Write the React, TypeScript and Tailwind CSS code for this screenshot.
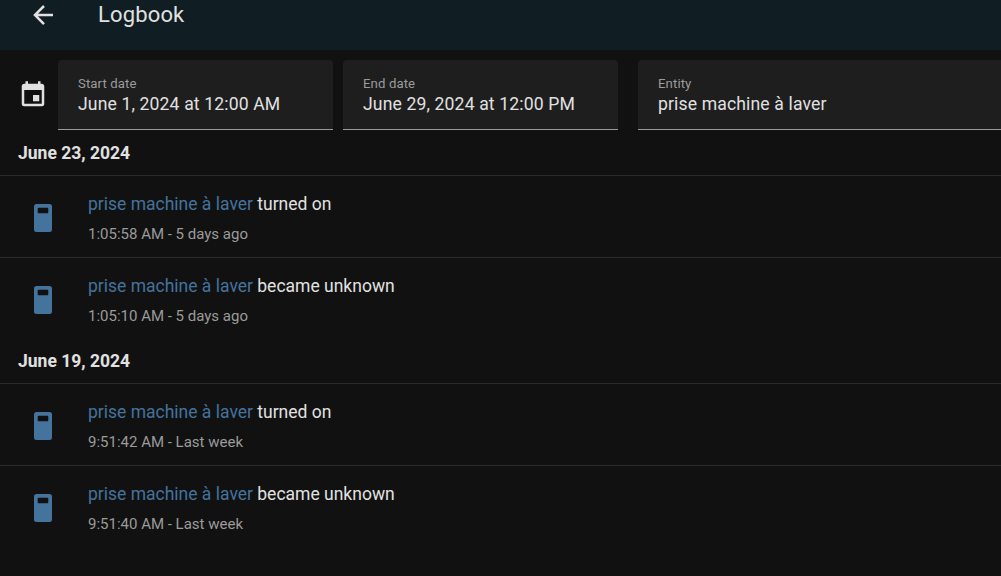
const font = { fontFamily: 'Roboto, sans-serif' };

function Field({ label, value, className }: { label: string; value: string; className: string }) {
  return (
    <div className={`h-[70px] shrink-0 rounded-t-[4px] bg-[#1e1e1e] border-b border-[#9b9b9b] pl-5 pt-[15px] ${className}`}>
      <div className="text-[13.2px] leading-[17px] tracking-[0.1px] text-[#9b9b9b]">{label}</div>
      <div className="text-[17.6px] leading-[24px] tracking-[0.13px] text-[#e1e1e1] whitespace-nowrap">{value}</div>
    </div>
  );
}

function DeviceIcon() {
  return (
    <svg width="18" height="28" viewBox="0 0 18 28" className="shrink-0">
      <path
        fillRule="evenodd"
        fill="#44739e"
        d="M2.5 0H15.5A2.5 2.5 0 0 1 18 2.5V25.5A2.5 2.5 0 0 1 15.5 28H2.5A2.5 2.5 0 0 1 0 25.5V2.5A2.5 2.5 0 0 1 2.5 0ZM4.7 3.7A1 1 0 0 0 3.7 4.7V8.3A1 1 0 0 0 4.7 9.3H13.3A1 1 0 0 0 14.3 8.3V4.7A1 1 0 0 0 13.3 3.7Z"
      />
    </svg>
  );
}

function Row({ action, time, last }: { action: string; time: string; last?: boolean }) {
  return (
    <div className={`h-[82px] flex items-start ${last ? '' : 'border-b border-[#2b2b2b]'}`}>
      <div className="w-[88px] pl-[34px] pt-[28px] shrink-0 flex">
        <DeviceIcon />
      </div>
      <div className="pt-[16px]">
        <div className="text-[17.5px] leading-6 mb-[8px] whitespace-nowrap">
          <span className="text-[#44739e]">prise machine à laver</span>{' '}
          <span className="text-[#e1e1e1]">{action}</span>
        </div>
        <div className="text-[15px] leading-5 text-[#9b9b9b]">{time}</div>
      </div>
    </div>
  );
}

function DayHeading({ children, first }: { children: string; first?: boolean }) {
  return (
    <div className={`pl-[18px] border-b border-[#2b2b2b] text-[17.5px] leading-[22px] font-bold text-[#e1e1e1] ${first ? 'h-[46px] pt-[12px]' : 'h-[44px] pt-[10px]'}`}>
      {children}
    </div>
  );
}

export default function App() {
  return (
    <div style={font} className="w-[1001px] h-[576px] overflow-hidden bg-[#111111]">
      <header className="h-[50px] bg-[#101e24] flex items-start pl-[28px]">
        <svg width="30" height="30" viewBox="0 0 24 24" fill="#e1e1e1" className="shrink-0">
          <path d="M20,11V13H8L13.5,18.5L12.08,19.92L4.16,12L12.08,4.08L13.5,5.5L8,11H20Z" />
        </svg>
        <h1 className="ml-[40px] mt-[3px] text-[22px] leading-6 tracking-[0.15px] text-[#e1e1e1] font-normal">Logbook</h1>
      </header>
      <div className="flex items-center pt-[10px] h-[80px]">
        <div className="w-[58px] shrink-0 pl-[18px]">
          <svg width="30" height="30" viewBox="0 0 24 24" fill="#e1e1e1" className="block">
            <path d="M19,19H5V8H19M16,1V3H8V1H6V3H5C3.89,3 3,3.89 3,5V19A2,2 0 0,0 5,21H19A2,2 0 0,0 21,19V5C21,3.89 20.1,3 19,3H18V1M17,12H12V17H17V12Z" />
          </svg>
        </div>
        <Field label="Start date" value="June 1, 2024 at 12:00 AM" className="w-[275px] mr-[10px]" />
        <Field label="End date" value="June 29, 2024 at 12:00 PM" className="w-[275px] mr-[20px]" />
        <Field label="Entity" value="prise machine à laver" className="w-[380px]" />
      </div>
      <DayHeading first>June 23, 2024</DayHeading>
      <Row action="turned on" time="1:05:58 AM - 5 days ago" />
      <Row action="became unknown" time="1:05:10 AM - 5 days ago" last />
      <DayHeading>June 19, 2024</DayHeading>
      <Row action="turned on" time="9:51:42 AM - Last week" />
      <Row action="became unknown" time="9:51:40 AM - Last week" last />
    </div>
  );
}
